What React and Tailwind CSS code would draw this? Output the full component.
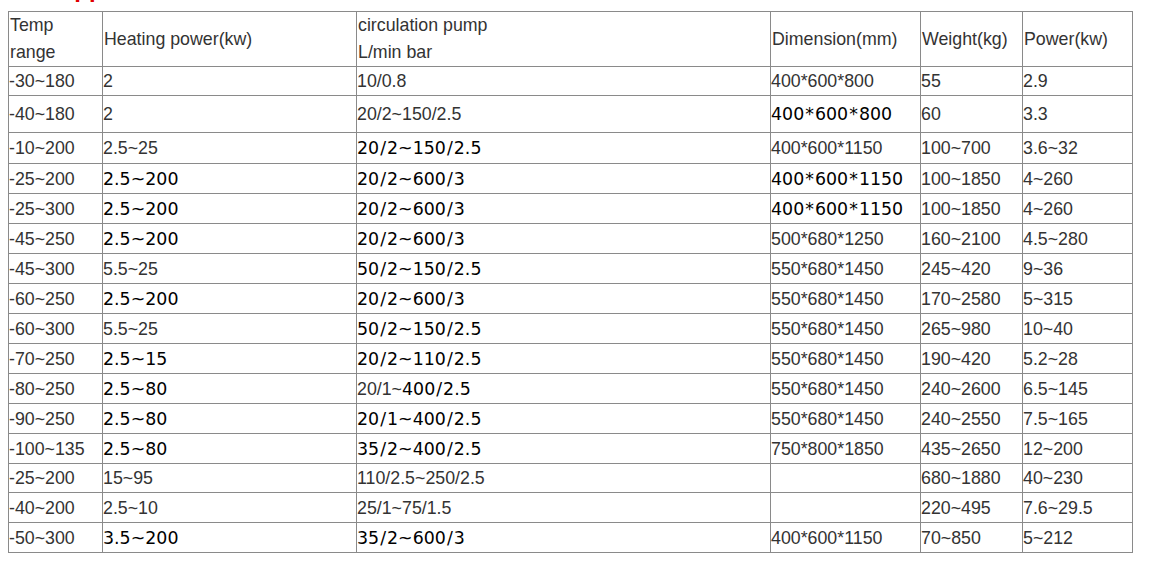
import React from "react";

const A = "font-['Liberation_Sans',Arial,sans-serif] text-[#333] text-[17.8px]";
const V = "font-['DejaVu_Sans',Verdana,sans-serif] text-black text-[17.4px]";

// each cell: [text, verdana?]
const rows = [
  [["-30~180"], ["2"], ["10/0.8"], ["400*600*800"], ["55"], ["2.9"]],
  [["-40~180"], ["2"], ["20/2~150/2.5"], ["400*600*800", 1], ["60"], ["3.3"]],
  [["-10~200"], ["2.5~25"], ["20/2~150/2.5", 1], ["400*600*1150"], ["100~700"], ["3.6~32"]],
  [["-25~200"], ["2.5~200", 1], ["20/2~600/3", 1], ["400*600*1150", 1], ["100~1850"], ["4~260"]],
  [["-25~300"], ["2.5~200", 1], ["20/2~600/3", 1], ["400*600*1150", 1], ["100~1850"], ["4~260"]],
  [["-45~250"], ["2.5~200", 1], ["20/2~600/3", 1], ["500*680*1250"], ["160~2100"], ["4.5~280"]],
  [["-45~300"], ["5.5~25"], ["50/2~150/2.5", 1], ["550*680*1450"], ["245~420"], ["9~36"]],
  [["-60~250"], ["2.5~200", 1], ["20/2~600/3", 1], ["550*680*1450"], ["170~2580"], ["5~315"]],
  [["-60~300"], ["5.5~25"], ["50/2~150/2.5", 1], ["550*680*1450"], ["265~980"], ["10~40"]],
  [["-70~250"], ["2.5~15", 1], ["20/2~110/2.5", 1], ["550*680*1450"], ["190~420"], ["5.2~28"]],
  [["-80~250"], ["2.5~80", 1], ["mixed"], ["550*680*1450"], ["240~2600"], ["6.5~145"]],
  [["-90~250"], ["2.5~80", 1], ["20/1~400/2.5", 1], ["550*680*1450"], ["240~2550"], ["7.5~165"]],
  [["-100~135"], ["2.5~80", 1], ["35/2~400/2.5", 1], ["750*800*1850"], ["435~2650"], ["12~200"]],
  [["-25~200"], ["15~95"], ["110/2.5~250/2.5"], [""], ["680~1880"], ["40~230"]],
  [["-40~200"], ["2.5~10"], ["25/1~75/1.5"], [""], ["220~495"], ["7.6~29.5"]],
  [["-50~300"], ["3.5~200", 1], ["35/2~600/3", 1], ["400*600*1150"], ["70~850"], ["5~212"]],
];

const heights = [29, 37, 31, 30, 30, 30, 30, 30, 30, 30, 30, 30, 30, 29, 30, 30];

// verdana's * and / are wider than dejavu's, pad them a little
const Wide = ({ text }) =>
  text.split("").map((ch, k) =>
    ch === "*" || ch === "/" ? (
      <span key={k} className="mx-[1px]">
        {ch}
      </span>
    ) : (
      ch
    )
  );

const td = "border border-[#8a8a8a] pl-0 pr-[1px] align-middle whitespace-nowrap";

const Cell = ({ c }) => {
  const [text, v] = c;
  if (text === "mixed") {
    return (
      <td className={td}>
        <span className={A}>20/1~</span>
        <span className={V}>
          <Wide text="400/2.5" />
        </span>
      </td>
    );
  }
  return <td className={`${td} ${v ? V : A}`}>{v ? <Wide text={text} /> : text}</td>;
};

export default function App() {
  return (
    <div className="bg-white w-[1165px] h-[564px] overflow-hidden">
      {/* cut-off heading above the table */}
      <div className="h-[11px] overflow-hidden">
        <div className="pl-[57px] -mt-[25px] text-[24px] leading-[28px] font-bold text-[#e00000] font-['Liberation_Sans',Arial,sans-serif]">
          Application
        </div>
      </div>
      <table className="ml-[8px] w-[1124px] table-fixed border-collapse border border-[#333]">
        <colgroup>
          <col className="w-[94px]" />
          <col className="w-[254px]" />
          <col className="w-[414px]" />
          <col className="w-[150px]" />
          <col className="w-[102px]" />
          <col className="w-[110px]" />
        </colgroup>
        <tbody>
          <tr className={`h-[54px] ${A} leading-[27px]`}>
            <td className="border border-[#8a8a8a] px-[1px]">
              Temp
              <br />
              range
            </td>
            <td className="border border-[#8a8a8a] px-[1px]">Heating power(kw)</td>
            <td className="border border-[#8a8a8a] px-[1px]">
              circulation pump
              <br />
              L/min bar
            </td>
            <td className="border border-[#8a8a8a] px-[1px]">Dimension(mm)</td>
            <td className="border border-[#8a8a8a] px-[1px]">Weight(kg)</td>
            <td className="border border-[#8a8a8a] px-[1px]">Power(kw)</td>
          </tr>
          {rows.map((r, i) => (
            <tr key={i} className="leading-[20px]" style={{ height: heights[i] }}>
              {r.map((c, j) => (
                <Cell key={j} c={c} />
              ))}
            </tr>
          ))}
        </tbody>
      </table>
    </div>
  );
}
